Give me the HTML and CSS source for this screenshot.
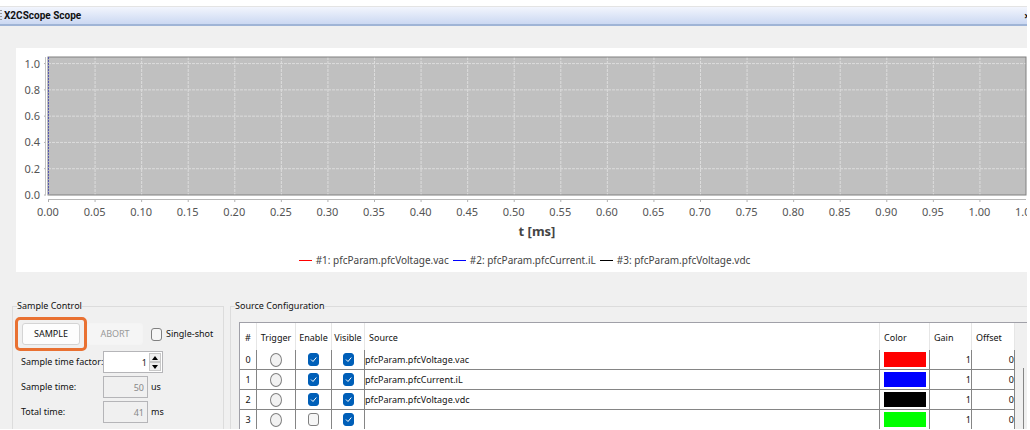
FILE: index.html
```html
<!DOCTYPE html>
<html lang="en">
<head>
<meta charset="utf-8">
<title>X2CScope Scope</title>
<link rel="stylesheet" href="styles.css">
</head>
<body>
<main class="window">
  <header class="titlebar">
    <span class="grip"></span>
    <h1 class="title">X2CScope Scope</h1>
    <button class="close" type="button" aria-label="Close">×</button>
  </header>

  <section class="chart">
    <div class="y-labels"><span>1.0</span><span>0.8</span><span>0.6</span><span>0.4</span><span>0.2</span><span>0.0</span></div>
    <svg class="plot" aria-hidden="true">
      <defs>
        <pattern id="cols" patternUnits="userSpaceOnUse" width="4.7619%" height="4">
          <rect width="1" height="3" fill="#dcdcdc"/>
        </pattern>
        <pattern id="xticks" patternUnits="userSpaceOnUse" width="4.7619%" height="10">
          <rect width="1" height="10" fill="#b0b0b0"/>
        </pattern>
      </defs>
      <rect width="100%" height="100%" fill="#c0c0c0"/>
      <rect width="100%" height="100%" fill="url(#cols)"/>
      <g class="rows">
        <line x2="100%" y1="4.762%" y2="4.762%"/>
        <line x2="100%" y1="23.81%" y2="23.81%"/>
        <line x2="100%" y1="42.857%" y2="42.857%"/>
        <line x2="100%" y1="61.905%" y2="61.905%"/>
        <line x2="100%" y1="80.952%" y2="80.952%"/>
      </g>
      <g class="yticks">
        <line x1="-4" x2="-2" y1="4.762%" y2="4.762%"/>
        <line x1="-4" x2="-2" y1="23.81%" y2="23.81%"/>
        <line x1="-4" x2="-2" y1="42.857%" y2="42.857%"/>
        <line x1="-4" x2="-2" y1="61.905%" y2="61.905%"/>
        <line x1="-4" x2="-2" y1="80.952%" y2="80.952%"/>
        <line x1="-4" x2="-2" y1="100%" y2="100%"/>
      </g>
      <rect class="frame" width="100%" height="100%"/>
      <line class="trace" x1="0.5" x2="0.5" y2="100%"/>
      <rect x="-3" width="1" height="100%" fill="#c4c4c4"/>
      <rect y="142" width="100%" height="1" fill="#b8b8b8"/>
      <rect y="143" width="100%" height="2" fill="url(#xticks)"/>
    </svg>
    <div class="x-labels"><span>0.00</span><span>0.05</span><span>0.10</span><span>0.15</span><span>0.20</span><span>0.25</span><span>0.30</span><span>0.35</span><span>0.40</span><span>0.45</span><span>0.50</span><span>0.55</span><span>0.60</span><span>0.65</span><span>0.70</span><span>0.75</span><span>0.80</span><span>0.85</span><span>0.90</span><span>0.95</span><span>1.00</span><span>1.05</span></div>
    <div class="x-title">t [ms]</div>
    <div class="series">
      <span class="key red">#1: pfcParam.pfcVoltage.vac</span>
      <span class="key blue">#2: pfcParam.pfcCurrent.iL</span>
      <span class="key black">#3: pfcParam.pfcVoltage.vdc</span>
    </div>
  </section>

  <div class="panels">
    <fieldset class="group control">
      <legend>Sample Control</legend>
      <div class="actions">
        <span class="highlight"><button class="btn" type="button">SAMPLE</button></span>
        <button class="btn" type="button" disabled>ABORT</button>
        <label class="single"><input class="check" type="checkbox">Single-shot</label>
      </div>
      <div class="form">
        <label for="factor">Sample time factor:</label>
        <span class="spinner">
          <input id="factor" type="text" value="1">
          <span class="steps">
            <button type="button" aria-label="Increase"><svg width="6" height="4"><path d="M0 4L3 0L6 4Z"/></svg></button>
            <button type="button" aria-label="Decrease"><svg width="6" height="4"><path d="M0 0L3 4L6 0Z"/></svg></button>
          </span>
        </span>
        <label for="stime">Sample time:</label>
        <span class="value"><input id="stime" type="text" value="50" disabled>us</span>
        <label for="ttime">Total time:</label>
        <span class="value"><input id="ttime" type="text" value="41" disabled>ms</span>
      </div>
    </fieldset>

    <fieldset class="group sources">
      <legend>Source Configuration</legend>
      <div class="scroll">
        <table>
          <colgroup><col class="c-num"><col class="c-trig"><col class="c-en"><col class="c-vis"><col><col class="c-color"><col class="c-gain"><col class="c-off"></colgroup>
          <thead>
            <tr><th class="mid">#</th><th class="mid">Trigger</th><th class="mid">Enable</th><th class="mid">Visible</th><th>Source</th><th>Color</th><th>Gain</th><th>Offset</th></tr>
          </thead>
          <tbody>
            <tr><td class="mid">0</td><td class="mid"><input class="radio" type="radio" name="trigger" aria-label="Trigger 0"></td><td class="mid"><input class="check" type="checkbox" checked aria-label="Enable 0"></td><td class="mid"><input class="check" type="checkbox" checked aria-label="Visible 0"></td><td>pfcParam.pfcVoltage.vac</td><td><div class="swatch red"></div></td><td class="num">1</td><td class="num">0</td></tr>
            <tr><td class="mid">1</td><td class="mid"><input class="radio" type="radio" name="trigger" aria-label="Trigger 1"></td><td class="mid"><input class="check" type="checkbox" checked aria-label="Enable 1"></td><td class="mid"><input class="check" type="checkbox" checked aria-label="Visible 1"></td><td>pfcParam.pfcCurrent.iL</td><td><div class="swatch blue"></div></td><td class="num">1</td><td class="num">0</td></tr>
            <tr><td class="mid">2</td><td class="mid"><input class="radio" type="radio" name="trigger" aria-label="Trigger 2"></td><td class="mid"><input class="check" type="checkbox" checked aria-label="Enable 2"></td><td class="mid"><input class="check" type="checkbox" checked aria-label="Visible 2"></td><td>pfcParam.pfcVoltage.vdc</td><td><div class="swatch black"></div></td><td class="num">1</td><td class="num">0</td></tr>
            <tr><td class="mid">3</td><td class="mid"><input class="radio" type="radio" name="trigger" aria-label="Trigger 3"></td><td class="mid"><input class="check" type="checkbox" aria-label="Enable 3"></td><td class="mid"><input class="check" type="checkbox" checked aria-label="Visible 3"></td><td></td><td><div class="swatch green"></div></td><td class="num">1</td><td class="num">0</td></tr>
          </tbody>
        </table>
        <div class="track"><div class="thumb"></div></div>
      </div>
    </fieldset>
  </div>
</main>
</body>
</html>
```
FILE: styles.css
```css
* { box-sizing: border-box; }
body {
  margin: 0;
  height: 100vh;
  padding: 6px 3px 1px 0;
  background: #fff;
  color: #111;
  font-family: "Noto Sans", sans-serif;
  font-size: 9px;
  line-height: 14px;
  overflow: hidden;
}
button, input { font: inherit; color: inherit; margin: 0; padding: 0; }
.window {
  height: 100%;
  display: flex;
  flex-direction: column;
  background: #f0f0f0;
  overflow: hidden;
}

/* Title bar */
.titlebar {
  flex: none;
  display: flex;
  align-items: center;
  height: 20px;
  border-top: 1px solid #e4e4e4;
  border-bottom: 2px solid #9fb4d6;
  background: linear-gradient(#f2f5fd, #cbd8f2);
  overflow: hidden;
}
.grip { width: 2px; height: 12px; margin-right: 2px; background: repeating-linear-gradient(#999 0 1px, transparent 1px 3px); }
.title { flex: 1; margin: 0; font-family: Roboto, sans-serif; font-size: 10px; font-weight: 700; color: #111; }
.close { width: 3px; height: 14px; border: 0; background: none; overflow: hidden; font-size: 11px; font-weight: 700; }

/* Chart */
.chart {
  --plot-h: 138px;
  flex: none;
  display: grid;
  grid-template-columns: 32px 1fr;
  grid-template-rows: var(--plot-h) 24px 24px auto;
  margin: 22px 0 0 16px;
  padding: 9px 1px 4px 0;
  background: #fff;
  color: #555;
  font-size: 11px;
  overflow: hidden;
}
.y-labels {
  display: grid;
  grid-template-rows: repeat(6, 1fr);
  align-items: center;
  height: calc(var(--plot-h) * 8 / 7);
  margin-top: calc(var(--plot-h) / -21);
  padding-right: 8px;
  text-align: right;
}
.plot { width: 100%; height: 100%; overflow: visible; }
.rows line { stroke: #dcdcdc; stroke-dasharray: 3 1; }
.yticks line { stroke: #b0b0b0; }
.frame { fill: none; stroke: #808080; }
.trace { stroke: #5558b0; stroke-dasharray: 2 1; }
.x-labels {
  grid-column: 2;
  align-self: end;
  display: grid;
  grid-template-columns: repeat(22, 1fr);
  width: calc(100% * 22 / 21);
  margin-left: calc(100% / -42);
  text-align: center;
}
.x-title { grid-column: 2; align-self: center; text-align: center; font-size: 13px; font-weight: 700; line-height: 18px; color: #444; }
.series { grid-column: 1 / -1; display: flex; justify-content: center; gap: 4px; padding: 10px 0 1px 7px; font-size: 10px; color: #444; }
.key { display: flex; align-items: center; gap: 4px; }
.key::before { content: ""; width: 13px; height: 1px; }
.key.red::before { background: #f00; }
.key.blue::before { background: #00f; }
.key.black::before { background: #000; }

/* Lower panels */
.panels { flex: 1; min-height: 0; display: flex; gap: 6px; padding: 27px 0 0 12px; }
.group { flex: none; min-width: 0; height: 160px; margin: 0; border: 1px solid #dcdcdc; }
.group legend { padding: 0; }
.control { width: 212px; padding: 4px 2px; }
.control legend { margin-left: 2px; }
.sources { flex: 1; border-right: 0; padding: 9px 0 0 8px; }
.sources legend { margin-left: -4px; }

.actions { display: flex; align-items: center; }
.highlight { display: flex; border: 3px solid #e97132; border-radius: 5px; padding: 3px 4px; }
.btn { width: 58px; height: 22px; border: 1px solid #d4d4d4; border-radius: 3px; background: #fdfdfd; }
.btn:disabled { width: 56px; border-color: #f4f4f4; background: #f5f5f5; color: #999; }
.single { display: flex; align-items: center; gap: 4px; margin-left: 8px; white-space: nowrap; }

.form { display: grid; grid-template-columns: 82px 1fr; row-gap: 3px; align-items: center; padding-left: 6px; white-space: nowrap; }
.form input { width: 45px; height: 22px; border: 1px solid #b5b5b8; background: #f0f0f0; color: #888; text-align: right; padding-right: 3px; border-radius: 0; }
.value { display: flex; align-items: center; gap: 3px; }
.spinner { display: flex; width: 60px; height: 22px; border: 1px solid #b5b5b8; background: #fff; }
.form .spinner input { height: 20px; border: 0; background: #fff; color: #222; padding-right: 2px; }
.steps { flex: 1; display: grid; padding: 1px 1px 1px 0; }
.steps button { display: grid; place-items: center; border: 1px solid #c8c8c8; background: #efefef; }

.check, .radio { appearance: none; display: block; width: 11px; height: 13px; border: 1px solid #808080; border-radius: 3px; background: #f6f6f6; }
.radio { width: 12px; height: 14px; border-radius: 50%; background: #f2f2f2; }
.mid .check, .mid .radio { margin: 0 auto; }
.check:checked {
  border-color: #005fb8;
  background: #005fb8 url("data:image/svg+xml,%3Csvg xmlns='http://www.w3.org/2000/svg' viewBox='0 0 9 11'%3E%3Cpath d='M2 5.5L4 7.5L7.300 3.500' fill='none' stroke='white'/%3E%3C/svg%3E") center / 9px 11px no-repeat;
}

/* Source table */
.scroll { display: flex; height: 100%; border: 1px solid #a0a0a8; border-right: 0; }
table { flex: 1; align-self: flex-start; border-collapse: separate; border-spacing: 0; table-layout: fixed; background: #fff; }
.c-num { width: 17px; }
.c-trig { width: 39px; }
.c-en { width: 36px; }
.c-vis { width: 33px; }
.c-color { width: 50px; }
.c-gain { width: 42px; }
.c-off { width: 43px; }
th { height: 27px; padding: 2px 0 0 4px; border-right: 1px solid #e6e6e6; font-weight: 400; text-align: left; }
td { height: 20px; padding: 0; border-right: 1px solid #858585; border-bottom: 1px solid #858585; }
th.mid { padding-left: 0; }
.mid { text-align: center; }
.num { text-align: right; }
.swatch { height: 15px; margin: 0 3px 0 4px; }
.swatch.red { background: #f00; }
.swatch.blue { background: #00f; }
.swatch.black { background: #000; }
.swatch.green { background: #0f0; }
.track { width: 12px; padding: 45px 3px 0 8px; }
.thumb { width: 1px; height: 100%; background: #858585; }
```
